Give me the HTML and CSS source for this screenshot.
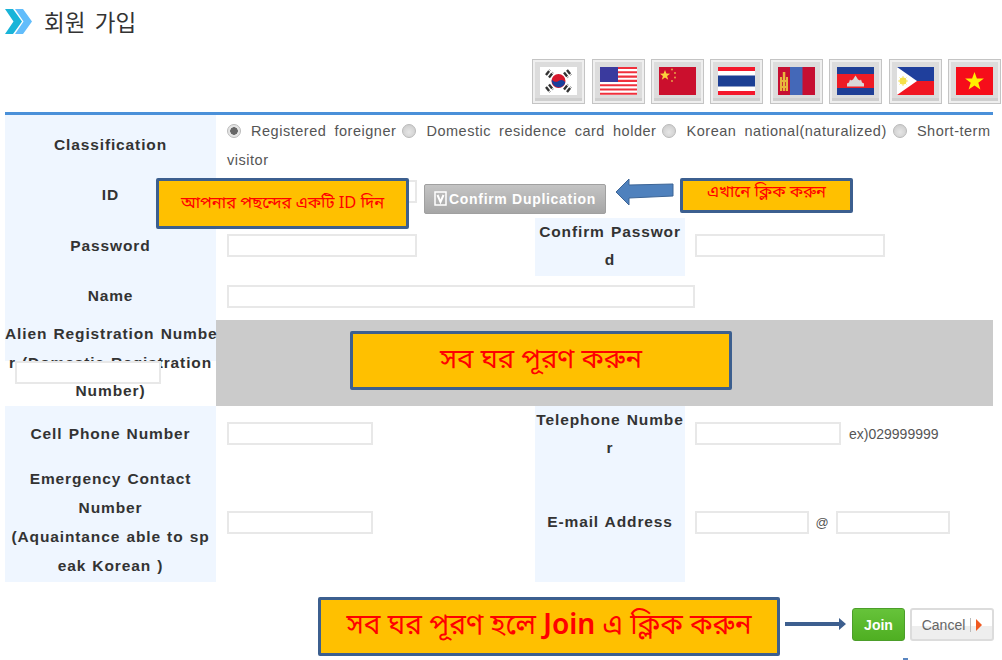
FILE: index.html
```html
<!DOCTYPE html>
<html lang="ko">
<head>
<meta charset="utf-8">
<title>회원 가입</title>
<link rel="stylesheet" href="styles.css">
</head>
<body>
<div class="page">
  <header class="head">
    <svg class="chev" viewBox="0 0 27 25" width="27" height="25"><path fill="#19b4d8" d="M0 0h8l9 12.5L8 25H0l8.500-12.500z"/><path fill="#62bdfb" d="M10 0h8l9 12.500L18 25h-8l8.500-12.500z"/></svg>
    <h1 class="title">회원 가입</h1>
  </header>

  <div class="flags">
    <a class="flag"><svg viewBox="0 0 37 28"><rect width="37" height="28" fill="#fff"/><circle cx="18.500" cy="14" r="7" fill="#d6172c"/><path d="M11.700 12.500a7 7 0 0 0 13.600 3c-2-3-4.500-3-6.800-1.500s-4.800 1-6.800-1.500z" fill="#1a3f9c"/><g stroke="#333" stroke-width="2.400" stroke-dasharray="5 1"><path d="M6 8l4-5M9 10.500l4-5M24 5.500l4 5M27 3l4 5M6 20l4 5M9 17.500l4 5M24 22.500l4-5M27 25l4-5"/></g></svg></a>
    <a class="flag"><svg viewBox="0 0 37 28"><rect width="37" height="28" fill="#fff"/><path d="M0 1h37M0 5.300h37M0 9.600h37M0 13.900h37M0 18.200h37M0 22.500h37M0 26.800h37" stroke="#f0303c" stroke-width="2.100"/><rect width="18" height="15" fill="#3a3a9e"/></svg></a>
    <a class="flag"><svg viewBox="0 0 37 28"><rect width="37" height="28" fill="#cb0f2d"/><path d="M6 3l1.400 3.600 3.700.1-3 2.300 1.100 3.700L6 10.600l-3.200 2.100 1.100-3.700-3-2.300 3.700-.1z" fill="#fbd23c"/><g fill="#e8b04a"><circle cx="13" cy="2.500" r=".9"/><circle cx="16" cy="6" r=".9"/><circle cx="16" cy="10.500" r=".9"/><circle cx="13" cy="14" r=".9"/></g></svg></a>
    <a class="flag"><svg viewBox="0 0 37 28"><rect width="37" height="28" fill="#f4182c"/><rect y="4" width="37" height="20" fill="#fff"/><rect y="8.500" width="37" height="11" fill="#1c3f94"/></svg></a>
    <a class="flag"><svg viewBox="0 0 37 28"><rect width="37" height="28" fill="#c60f32"/><rect x="12" width="12.500" height="28" fill="#4468b8"/><g fill="#e8b83c"><rect x="2" y="10" width="2" height="14"/><rect x="8" y="10" width="2" height="14"/><rect x="4.800" y="5" width="2.500" height="19"/><rect x="2" y="13" width="8" height="2"/><rect x="2" y="19" width="8" height="2"/></g></svg></a>
    <a class="flag"><svg viewBox="0 0 37 28"><rect width="37" height="28" fill="#1f3f96"/><rect y="7" width="37" height="14" fill="#ee1c25"/><path d="M10 19.500v-3l2-1 1-3 1 1 2-1 2.500-4 2.500 4 2 1 1-1 1 3 2 1v3z" fill="#d8d8d8"/></svg></a>
    <a class="flag"><svg viewBox="0 0 37 28"><rect width="37" height="14" fill="#1f3f9c"/><rect y="14" width="37" height="14" fill="#f01622"/><path d="M0 0l20 14L0 28z" fill="#fff"/><circle cx="6" cy="14" r="3.500" fill="#f5e04a"/><path d="M1 14h10M6 9v10M2.500 10.500l7 7M9.500 10.500l-7 7" stroke="#f5e04a" stroke-width=".8"/></svg></a>
    <a class="flag"><svg viewBox="0 0 37 28"><rect width="37" height="28" fill="#f60d1a"/><path d="M18.500 5l2.400 6.500h7l-5.600 4.200 2.100 6.800-5.900-4-5.900 4 2.100-6.800-5.600-4.200h7z" fill="#fff000"/></svg></a>
  </div>

  <table class="form">
    <colgroup><col class="c1"><col class="c2"><col class="c3"><col class="c4"></colgroup>
    <tr class="r-class">
      <th>Classification</th>
      <td colspan="3" class="types">
        <input type="radio" name="t" class="radio" checked> Registered foreigner
        <input type="radio" name="t" class="radio"> Domestic residence card holder
        <input type="radio" name="t" class="radio"> Korean national(naturalized)
        <input type="radio" name="t" class="radio"> <span class="nowrap">Short-term</span> visitor
      </td>
    </tr>
    <tr class="r-id">
      <th>ID</th>
      <td colspan="3">
        <div class="idrow">
          <input class="field w190" type="text">
          <button class="dup" type="button"><svg class="tick" viewBox="0 0 13 15" width="13" height="15"><path d="M1 1h11v13H1z" fill="none" stroke="#fff" stroke-width="1.500"/><path d="M3.500 4l3 7 3-7" fill="none" stroke="#fff" stroke-width="2"/></svg>Confirm Duplication</button>
        </div>
      </td>
    </tr>
    <tr class="r-pw">
      <th>Password</th>
      <td><input class="field w190" type="text"></td>
      <th class="two">Confirm Passwor<br>d</th>
      <td class="last"><input class="field w190" type="text"></td>
    </tr>
    <tr class="r-name">
      <th>Name</th>
      <td colspan="3"><input class="field w468" type="text"></td>
    </tr>
    <tr class="r-alien">
      <th class="alien">Alien Registration Numbe<br>r (Domestic Registration<br>Number)</th>
      <td colspan="3" class="grey"></td>
    </tr>
    <tr class="r-phone">
      <th>Cell Phone Number</th>
      <td><input class="field w145" type="text"></td>
      <th class="two">Telephone Numbe<br>r</th>
      <td class="last"><input class="field w145" type="text"><span class="hint">ex)029999999</span></td>
    </tr>
    <tr class="r-em">
      <th class="four">Emergency Contact<br>Number<br>(Aquaintance able to sp<br>eak Korean )</th>
      <td><input class="field w145" type="text"></td>
      <th>E-mail Address</th>
      <td class="last"><input class="field w114" type="text"><span class="at">@</span><input class="field w114" type="text"></td>
    </tr>
  </table>

  <div class="actions">
    <button class="join" type="button">Join</button>
    <button class="cancel" type="button">Cancel<span class="sep"></span><span class="tri"></span></button>
  </div>

  <input class="field float-input" type="text">
  <div class="note n1" lang="bn">আপনার পছন্দের একটি ID দিন</div>
  <div class="note n2" lang="bn"><span class="up">এখানে ক্লিক করুন</span></div>
  <div class="note n3" lang="bn">সব ঘর পূরণ করুন</div>
  <div class="note n4" lang="bn">সব ঘর পূরণ হলে <b class="strong">Join</b> এ ক্লিক করুন</div>
  <svg class="arrow a1" viewBox="0 0 60 28" width="60" height="28"><path d="M1 14L14 1v6l44-1v12l-44 2v7z" fill="#4f81bd" stroke="#3d6596"/></svg>
  <svg class="arrow a2" viewBox="0 0 62 12" width="62" height="12"><path d="M0 4h54V0l7 6-7 6V8H0z" fill="#3d5f8f"/></svg>
  <span class="stray"></span>
</div>
</body>
</html>
```
FILE: styles.css
```css
* { box-sizing: border-box; }
html, body { margin: 0; padding: 0; background: #fff; }
body { font-family: "Liberation Sans", "Noto Sans Bengali", "Noto Sans", sans-serif; color: #555; overflow: hidden; }
.page { position: relative; width: 1002px; height: 660px; overflow: hidden; }

.head { display: flex; align-items: center; gap: 12px; height: 43px; padding-left: 5px; }
.chev { flex: none; }
.title { margin: 0 0 1px; font: 400 22.500px/1 "Noto Sans CJK KR", sans-serif; color: #333; word-spacing: 3px; }

.flags { display: flex; justify-content: flex-end; gap: 6.400px; padding-right: 1px; margin-top: 16px; height: 45px; }
.flag { display: block; width: 53px; height: 45px; padding: 7px 7px 9px; background: #dcdcdc; border: 1px solid #c4c4c4; box-shadow: inset 0 0 0 2px #efefef, inset 0 -3px 0 2px #cfcfcf; }
.flag svg { display: block; width: 37px; height: 28px; }

.form { table-layout: fixed; border-collapse: collapse; width: 988px; margin: 8px 0 0 5px; border-top: 3px solid #4a90d9; }
.c1 { width: 211px; } .c2 { width: 319px; } .c3 { width: 150px; } .c4 { width: 308px; }
.form th { padding: 0 0 4px; background: #eff6ff; color: #333; font-size: 15.500px; font-weight: 700; line-height: 29px; letter-spacing: .880px; word-spacing: 1px; text-align: center; white-space: nowrap; overflow: visible; }
.form td { padding: 0 0 0 11px; vertical-align: middle; font-size: 14.500px; letter-spacing: .650px; color: #555; }
.form .last { padding-left: 10px; }
.r-class { height: 61px; } .r-id { height: 43px; } .r-pw { height: 58px; } .r-name { height: 44px; }
.r-alien { height: 86px; } .r-phone { height: 58px; } .r-em { height: 118px; }
.form .r-class th, .form th.four { padding-bottom: 2px; }
.form .r-name th { padding-bottom: 6px; }
.form th.two { padding-bottom: 2px; line-height: 28px; }
.form .types { vertical-align: top; padding-top: 2px; line-height: 29px; letter-spacing: .520px; word-spacing: 3.500px; }
.nowrap { white-space: nowrap; }
.radio { appearance: none; display: inline-block; width: 14px; height: 14px; margin: 0 2px 0 -2px; vertical-align: -2px; border-radius: 50%; border: 1px solid #bbb; background: radial-gradient(circle at 50% 60%, #e6e6e6, #c8c8c8); }
.radio:first-child { margin-left: 0; }
.radio:checked { background: radial-gradient(circle, #666 0 3.500px, #e4e4e4 4px); }
.field { display: inline-block; height: 23px; margin-bottom: 4px; padding: 0; border: 2px solid #e8e8e8; background: #fff; vertical-align: middle; }
.r-em .field { margin-bottom: 2px; }
.w190 { width: 190px; } .w468 { width: 468px; } .w145 { width: 146px; } .w114 { width: 114px; }
.idrow { display: flex; align-items: flex-start; gap: 7px; }
.idrow .field { margin-bottom: 0; }
.dup { flex: none; display: flex; align-items: center; justify-content: center; gap: 2px; height: 30px; width: 182px; margin-top: 4px; padding: 0; border: 1px solid #a0a0a0; border-radius: 2px; background: linear-gradient(#c4c4c4, #a6a6a6); color: #fff; font: 700 14px "Liberation Sans", sans-serif; letter-spacing: .700px; white-space: nowrap; }
.tick { flex: none; }
.grey { background: #cbcbcb; }
.form .alien { padding-bottom: 0; background: linear-gradient(#eff6ff, #eff6ff) top/100% 41px no-repeat; line-height: 28.600px; }
.hint { margin-left: 8px; font-size: 14px; letter-spacing: 0; }
.at { display: inline-block; width: 27px; text-align: center; font-size: 13px; }

.actions { display: flex; justify-content: flex-end; gap: 5px; padding-right: 8px; margin-top: 26px; }
.join, .cancel { height: 33px; padding: 0; border-radius: 3px; font: 14px "Liberation Sans", sans-serif; }
.join { width: 53px; border: 1px solid #4c9e2a; background: linear-gradient(#66c33a, #4faf22); color: #fff; font-weight: 700; }
.cancel { display: flex; align-items: center; justify-content: center; gap: 5px; width: 84px; border: 2px solid #dcdcdc; background: linear-gradient(#fff 55%, #eee 55%); color: #666; }
.sep { width: 1px; height: 14px; background: #bbb; }
.tri { width: 0; height: 0; border-left: 6px solid #f05a22; border-top: 6px solid transparent; border-bottom: 6px solid transparent; }

.float-input { position: absolute; left: 15px; top: 361px; width: 146px; }
.note { position: absolute; display: flex; align-items: center; justify-content: center; gap: .26em; background: #ffc000; border: 3px solid #3c5f8f; border-radius: 2px; color: #f00; font-family: "Noto Sans Bengali", "Noto Sans", "Liberation Sans", sans-serif; white-space: nowrap; }
.n1 { left: 156px; top: 178px; width: 253px; height: 51px; font-size: 16.500px; }
.n2 { left: 680px; top: 178px; width: 173px; height: 35px; font-size: 16.500px; }
.n3 { left: 350px; top: 331px; width: 382px; height: 59px; font-size: 27.500px; }
.n4 { left: 318px; top: 597px; width: 462px; height: 59px; font-size: 28px; }
.up { margin-bottom: 5px; }
.strong { font-weight: 600; }
.arrow { position: absolute; }
.a1 { left: 615px; top: 178px; }
.a2 { left: 785px; top: 618px; }
.stray { position: absolute; left: 903px; top: 658px; width: 5px; height: 2px; background: #5a86c0; }
```
